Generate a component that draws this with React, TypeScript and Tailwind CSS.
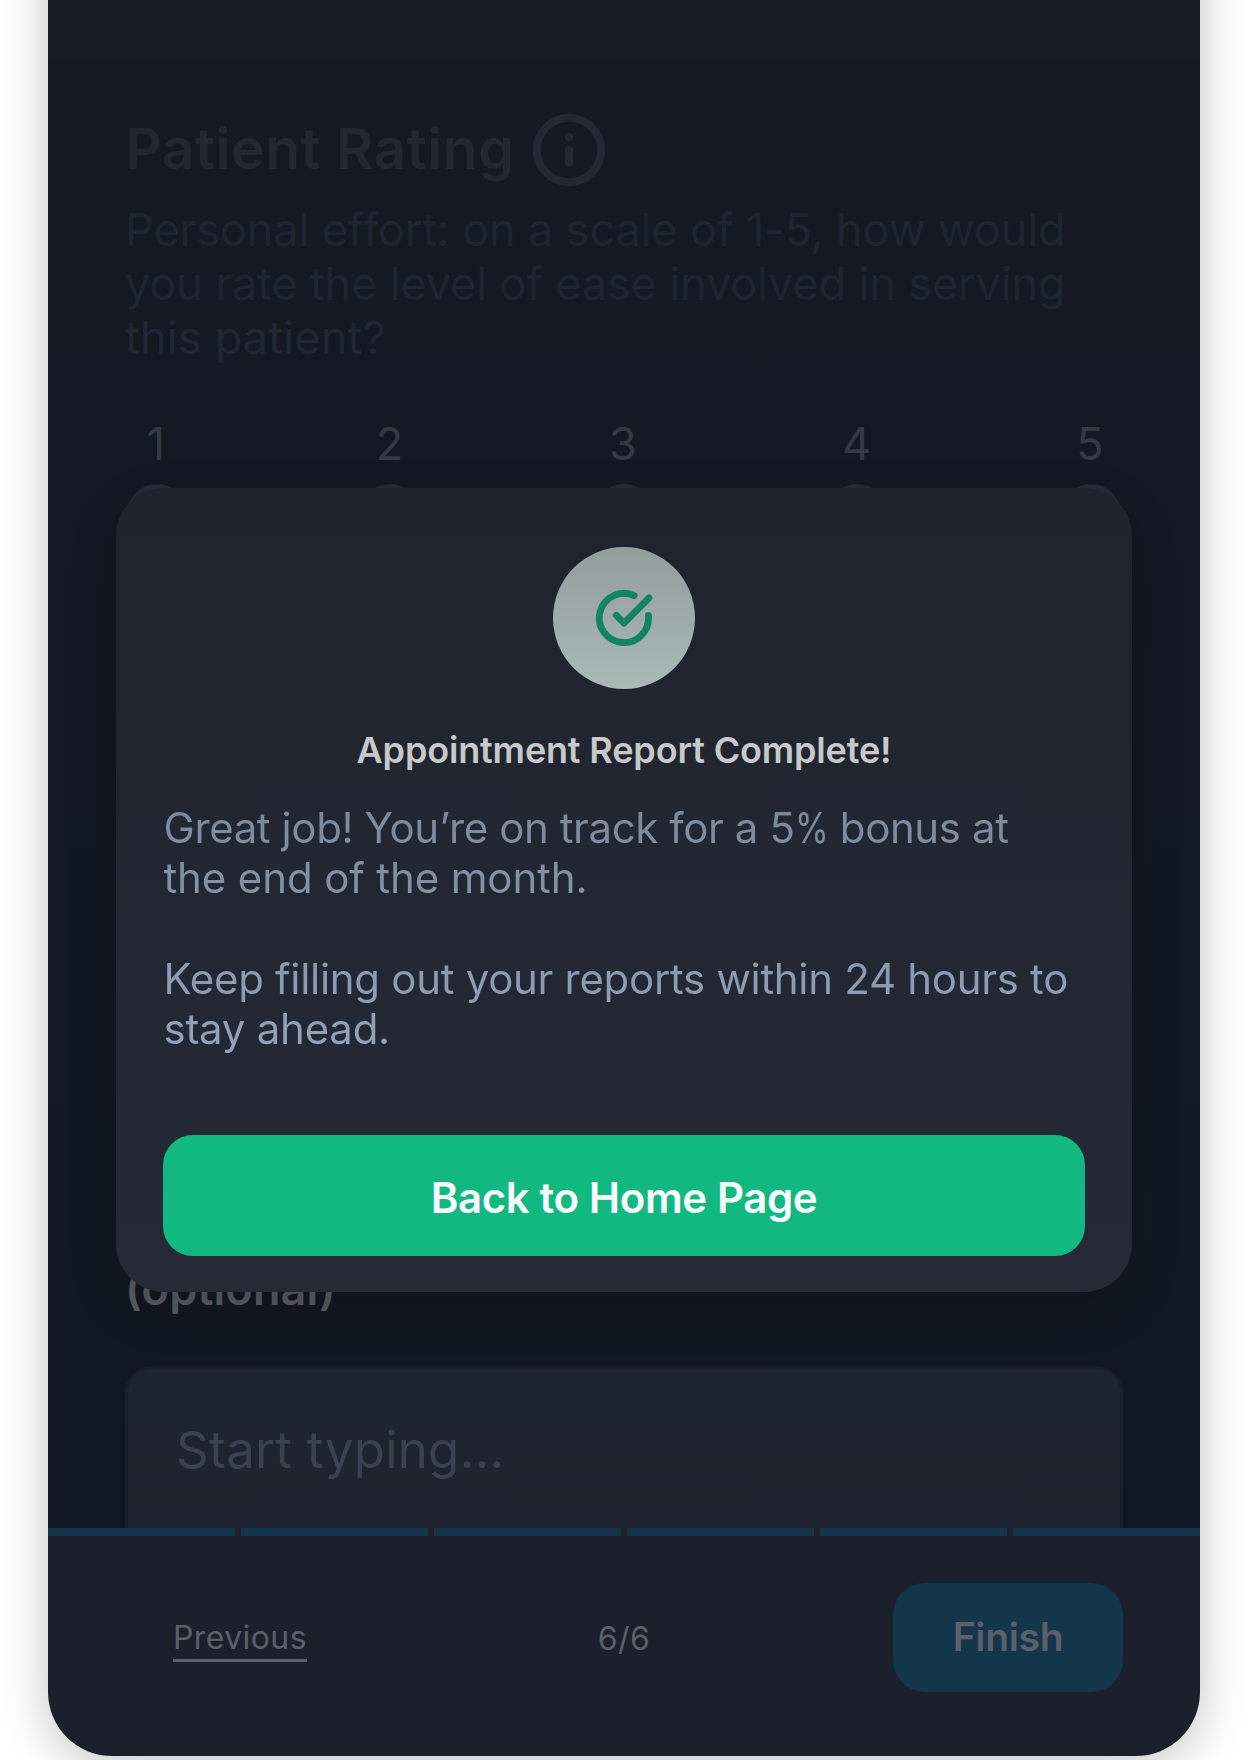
import React from "react";

const ratings = [1, 2, 3, 4, 5];
const steps = [1, 2, 3, 4, 5, 6];

function InfoIcon() {
  return (
    <svg className="size-[74px] shrink-0" viewBox="0 0 74 74" fill="none" stroke="#242834" strokeWidth="8" strokeLinecap="round">
      <circle cx="37" cy="37" r="32.2" />
      <path d="M37 37v12.5" />
      <circle cx="37" cy="24" r="4.2" fill="#242834" stroke="none" />
    </svg>
  );
}

function CheckIcon() {
  return (
    <svg className="size-[60px]" viewBox="0 0 60 60" fill="none" stroke="#138462" strokeWidth="6.8" strokeLinecap="round" strokeLinejoin="round">
      <path d="M40.2 7.6A24.6 24.6 0 1 0 54.4 27.3" />
      <path d="M22.3 27.4l7.7 7.8L55 9.8" />
    </svg>
  );
}

function RatingForm() {
  return (
    <div className="flex h-[1468px] flex-col overflow-hidden bg-linear-to-b from-[#141923] via-[#131824] via-30% to-[#121823] px-[77px] pt-[53px]">
      <div className="flex h-[74px] items-center gap-[18px]">
        <h1 className="pb-[3px] text-[57px] leading-[69px] font-semibold tracking-[0.5px] text-[#232732]">Patient Rating</h1>
        <InfoIcon />
      </div>
      <p className="mt-4 text-[45px] leading-[54px] tracking-[-0.12px] whitespace-nowrap text-[#1e2432]">
        Personal effort: on a scale of 1-5, how would
        <br />
        you rate the level of ease involved in serving
        <br />
        <span className="tracking-[0.2px] text-[#202633]">this patient?</span>
      </p>
      <div className="mt-[52px] mr-[3px] ml-[1px] flex justify-between">
        {ratings.map((n) => (
          <label key={n} className="flex w-[60px] flex-col items-center text-[45px] leading-[54px] text-[#353944]">
            {n}
            <span className="mt-[13px] ml-[1px] size-[60px] rounded-full bg-[#272c3a]" />
          </label>
        ))}
      </div>
      <h2 className="mt-[718px] text-[45px] leading-[54px] font-semibold tracking-[0.15px] text-[#5a5d67]">(optional)</h2>
      <div className="mt-[50px] h-[300px] shrink-0 rounded-[27px] border-[3px] border-[#1b1e29] bg-linear-to-b from-[#1e242f] to-[#1f222e] pt-[50px] pl-[48px] text-[51px] leading-[62px] tracking-[0.25px] text-[#3b4150]">
        Start typing...
      </div>
    </div>
  );
}

function Footer() {
  return (
    <footer className="h-[228px] bg-[#1b202c]">
      <div className="flex h-2 gap-[6px] bg-[#211f2c]">
        {steps.map((s) => (
          <div key={s} className="flex-1 bg-[#13364a]" />
        ))}
      </div>
      <div className="grid grid-cols-3 items-start pt-[47px] text-[32px] leading-[38px] tracking-[0.4px] text-[#5b5f6a]">
        <div className="pt-[36px] pl-[125px]">
          <a className="inline-block border-b-[3px] border-[#5b5f6a] pb-[2px]">Previous</a>
        </div>
        <div className="pt-[37px] text-center">6/6</div>
        <button className="mr-[77px] h-[109px] w-[230px] justify-self-end rounded-[32px] bg-[#13364a] pb-[1px] text-[39px] font-semibold tracking-[-0.35px]">
          Finish
        </button>
      </div>
    </footer>
  );
}

function CompleteModal() {
  return (
    <div className="absolute top-[588px] left-[68px] flex h-[804px] w-[1016px] flex-col rounded-[48px] bg-linear-to-b from-[#1f232e] to-[#262a36] px-[47px] pt-[59px] pb-[36px] shadow-[0_18px_48px_rgba(0,0,0,0.2)]">
      <div className="mx-auto flex size-[142px] shrink-0 items-center justify-center rounded-full bg-linear-to-b from-[#929d9c] to-[#aabab5]">
        <CheckIcon />
      </div>
      <h3 className="mt-[39px] text-center text-[36px] leading-[44px] font-semibold tracking-[-0.16px] text-[#c7c8ca]">Appointment Report Complete!</h3>
      <p className="mt-[31px] ml-[0.5px] bg-linear-to-b from-[#7b889c] to-[#93a3bb] bg-clip-text text-[42px] leading-[50.2px] tracking-[-0.13px] whitespace-nowrap text-transparent">
        <span className="tracking-[-0.4px]">
          Great job! You’re on track for a 5
          <span className="-mr-[7px] inline-block origin-left scale-x-[0.82] text-[#7d8a9e]">%</span> bonus at
        </span>
        <br />
        the end of the month.
        <br />
        <br />
        <span className="tracking-[-0.3px]">Keep filling out your reports within 24 hours to</span>
        <br />
        <span className="tracking-[-0.25px]">stay ahead.</span>
      </p>
      <button className="mt-auto h-[121px] rounded-[30px] bg-[#11b981] pt-[3px] text-[42px] font-semibold tracking-[-0.4px] text-[#f8fafc]">
        Back to Home Page
      </button>
    </div>
  );
}

export default function App() {
  return (
    <div className="h-[1760px] overflow-hidden bg-white font-['Inter',sans-serif]">
      <div className="relative mx-auto -mt-[100px] w-[1152px] rounded-b-[64px] shadow-[0_8px_48px_rgba(0,0,0,0.24)]">
        <div className="overflow-hidden rounded-b-[64px]">
          <div className="h-[160px] bg-[#171b26]" />
          <RatingForm />
          <Footer />
        </div>
        <CompleteModal />
      </div>
    </div>
  );
}
